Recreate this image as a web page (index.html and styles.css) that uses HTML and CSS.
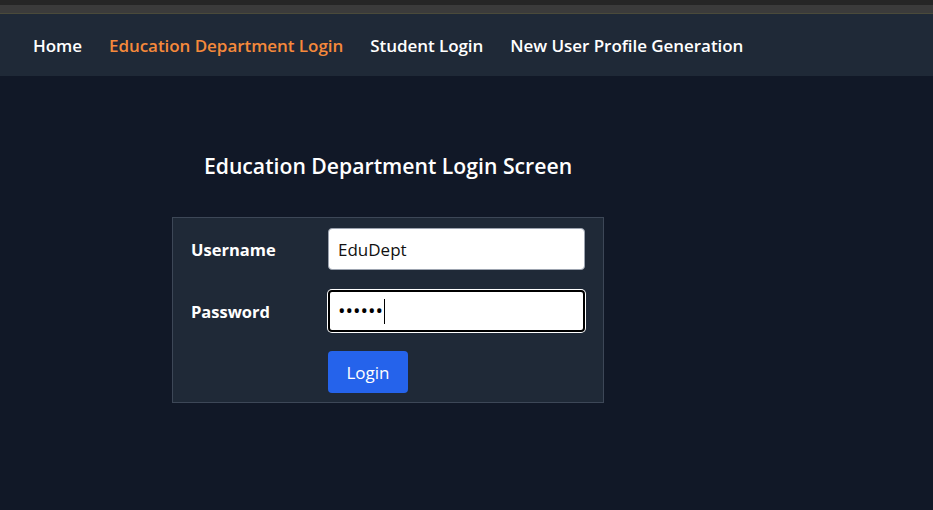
FILE: index.html
```html
<!DOCTYPE html>
<html lang="en">
<head>
<meta charset="utf-8">
<title>Education Department Login</title>
<link rel="stylesheet" href="styles.css">
</head>
<body>
<div class="chrome"><div class="chrome-top"></div><div class="chrome-bar"></div><div class="chrome-line"></div></div>
<nav class="nav">
  <a class="nav-link">Home</a>
  <a class="nav-link active">Education Department Login</a>
  <a class="nav-link">Student Login</a>
  <a class="nav-link">New User Profile Generation</a>
</nav>
<main class="main">
  <section class="login">
    <h1 class="title">Education Department Login Screen</h1>
    <form class="card">
      <label class="label">Username</label>
      <div class="field"><input class="input" type="text" value="EduDept"></div>
      <label class="label">Password</label>
      <div class="field"><div class="input focused"><span class="dots">••••••</span><span class="caret"></span></div></div>
      <div></div>
      <div><button type="button" class="btn">Login</button></div>
    </form>
  </section>
</main>
</body>
</html>
```
FILE: styles.css
```css
* { box-sizing: border-box; }
html, body { margin: 0; padding: 0; }
body {
  background: #111827;
  font-family: "Open Sans", "Noto Sans", sans-serif;
  color: #fff;
  height: 510px;
  overflow: hidden;
}
.chrome-top { height: 5px; background: #262626; }
.chrome-bar { height: 8px; background: #3b3b3b; }
.chrome-line { height: 1px; background: #4a4a3a; }
.nav {
  background: #1f2937;
  height: 62px;
  display: flex;
  align-items: center;
  padding-left: 33px;
  gap: 27px;
}
.nav-link {
  color: #fff;
  font-weight: 600;
  font-size: 17px;
  letter-spacing: -0.05px;
  padding-top: 1px;
}
.nav-link.active { color: #f6893b; }
.main { display: flex; padding-left: 172px; padding-top: 75px; }
.login { width: 432px; display: flex; flex-direction: column; align-items: center; }
.title {
  margin: 0 0 36px 0;
  font-size: 21.2px;
  font-weight: 600;
  line-height: 30px;
}
.card {
  width: 432px;
  background: #1f2937;
  border: 1px solid #3d4757;
  display: grid;
  grid-template-columns: 137px 257px;
  row-gap: 20px;
  padding: 10px 18px 9px 18px;
  align-items: center;
}
.label { font-weight: 700; font-size: 16.5px; }
.input {
  width: 257px;
  height: 42px;
  border-radius: 4px;
  border: 1px solid #9ca3af;
  background: #fff;
  font-family: inherit;
  font-size: 17px;
  padding: 0 9px;
  color: #111;
  outline: none;
  display: flex;
  align-items: center;
}
.input.focused {
  border: 2px solid #000;
  box-shadow: 0 0 0 1px #fff;
  padding: 0 8px;
}
.dots { font-size: 20px; line-height: 1; color: #000; }
.caret { width: 1px; height: 25px; background: #000; margin-left: 1px; }
.btn {
  background: #2563eb;
  color: #fff;
  border: none;
  border-radius: 4px;
  height: 42px;
  width: 80px;
  font-family: inherit;
  font-size: 17px;
  margin-top: -1px;
}
```
